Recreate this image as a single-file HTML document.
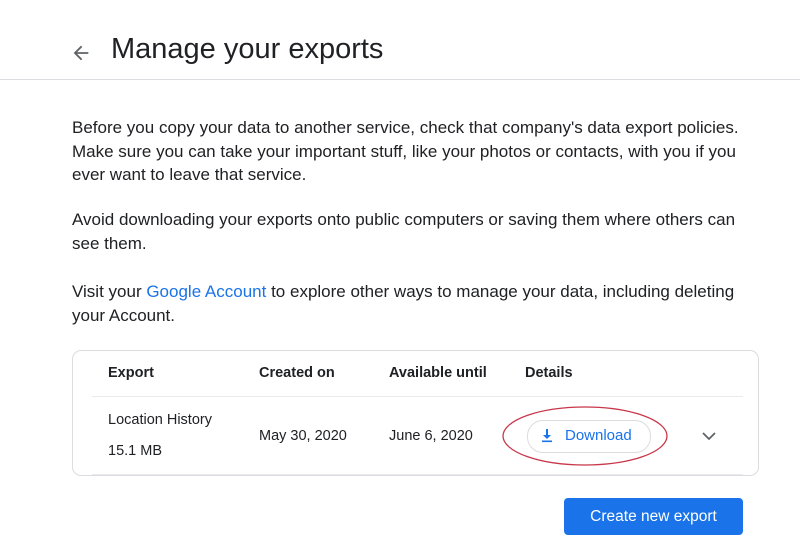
<!DOCTYPE html>
<html><head><style>
body{margin:0;width:800px;height:555px;background:#fff;font-family:"Liberation Sans",sans-serif;color:#202124;position:relative;overflow:hidden}
.a{position:absolute;white-space:nowrap}
p{position:absolute;left:72px;margin:0;font-size:17px;line-height:23.5px;color:#202124;width:690px}
.h{font-size:14.5px;font-weight:bold;color:#202124}
.c{font-size:14.5px;color:#202124}
</style></head><body>
<svg class="a" style="left:70px;top:42px" width="22" height="22" viewBox="0 0 24 24"><path d="M20 11H7.8l5.6-5.6L12 4l-8 8 8 8 1.4-1.4L7.8 13H20z" fill="#5f6368"/></svg>
<div class="a" style="left:111px;top:33px;font-size:29px;color:#202124">Manage your exports</div>
<div class="a" style="left:0;top:79px;width:800px;height:1px;background:#dadce0"></div>
<p style="top:116px">Before you copy your data to another service, check that company's data export policies. Make sure you can take your important stuff, like your photos or contacts, with you if you ever want to leave that service.</p>
<p style="top:208px">Avoid downloading your exports onto public computers or saving them where others can see them.</p>
<p style="top:280px">Visit your <span style="color:#1a73e8">Google Account</span> to explore other ways to manage your data, including deleting your Account.</p>
<div class="a" style="left:72px;top:350px;width:685px;height:124px;border:1px solid #dadce0;border-radius:9px"></div>
<div class="a h" style="left:108px;top:365px">Export</div>
<div class="a h" style="left:259px;top:365px">Created on</div>
<div class="a h" style="left:389px;top:365px">Available until</div>
<div class="a h" style="left:525px;top:365px">Details</div>
<div class="a" style="left:92px;top:396px;width:651px;height:1px;background:#e8eaed"></div>
<div class="a c" style="left:108px;top:412px">Location History</div>
<div class="a c" style="left:108px;top:443px">15.1 MB</div>
<div class="a c" style="left:259px;top:428px">May 30, 2020</div>
<div class="a c" style="left:389px;top:428px">June 6, 2020</div>
<div class="a" style="left:527px;top:420px;width:122px;height:31px;border:1px solid #dadce0;border-radius:16px"></div>
<svg class="a" style="left:540px;top:428px" width="14" height="15" viewBox="0 0 14 15"><path d="M6 1h2v6h3l-4 4-4-4h3z" fill="#1a73e8"/><rect x="2" y="12.5" width="10" height="1.6" fill="#1a73e8"/></svg>
<div class="a" style="left:565px;top:427px;font-size:15px;color:#1a73e8">Download</div>
<svg class="a" style="left:500px;top:403px" width="170" height="66"><ellipse cx="85" cy="33" rx="82" ry="29" fill="none" stroke="#c8374a" stroke-width="1.3"/></svg>
<svg class="a" style="left:701px;top:430px" width="16" height="12" viewBox="0 0 16 12"><path d="M2 3l6 6 6-6" fill="none" stroke="#5f6368" stroke-width="1.8"/></svg>
<div class="a" style="left:92px;top:474px;width:651px;height:1px;background:#e8eaed"></div>
<div class="a" style="left:564px;top:498px;width:179px;height:37px;background:#1a73e8;border-radius:4px;color:#fff;font-size:15.5px;line-height:37px;text-align:center">Create new export</div>
</body></html>
